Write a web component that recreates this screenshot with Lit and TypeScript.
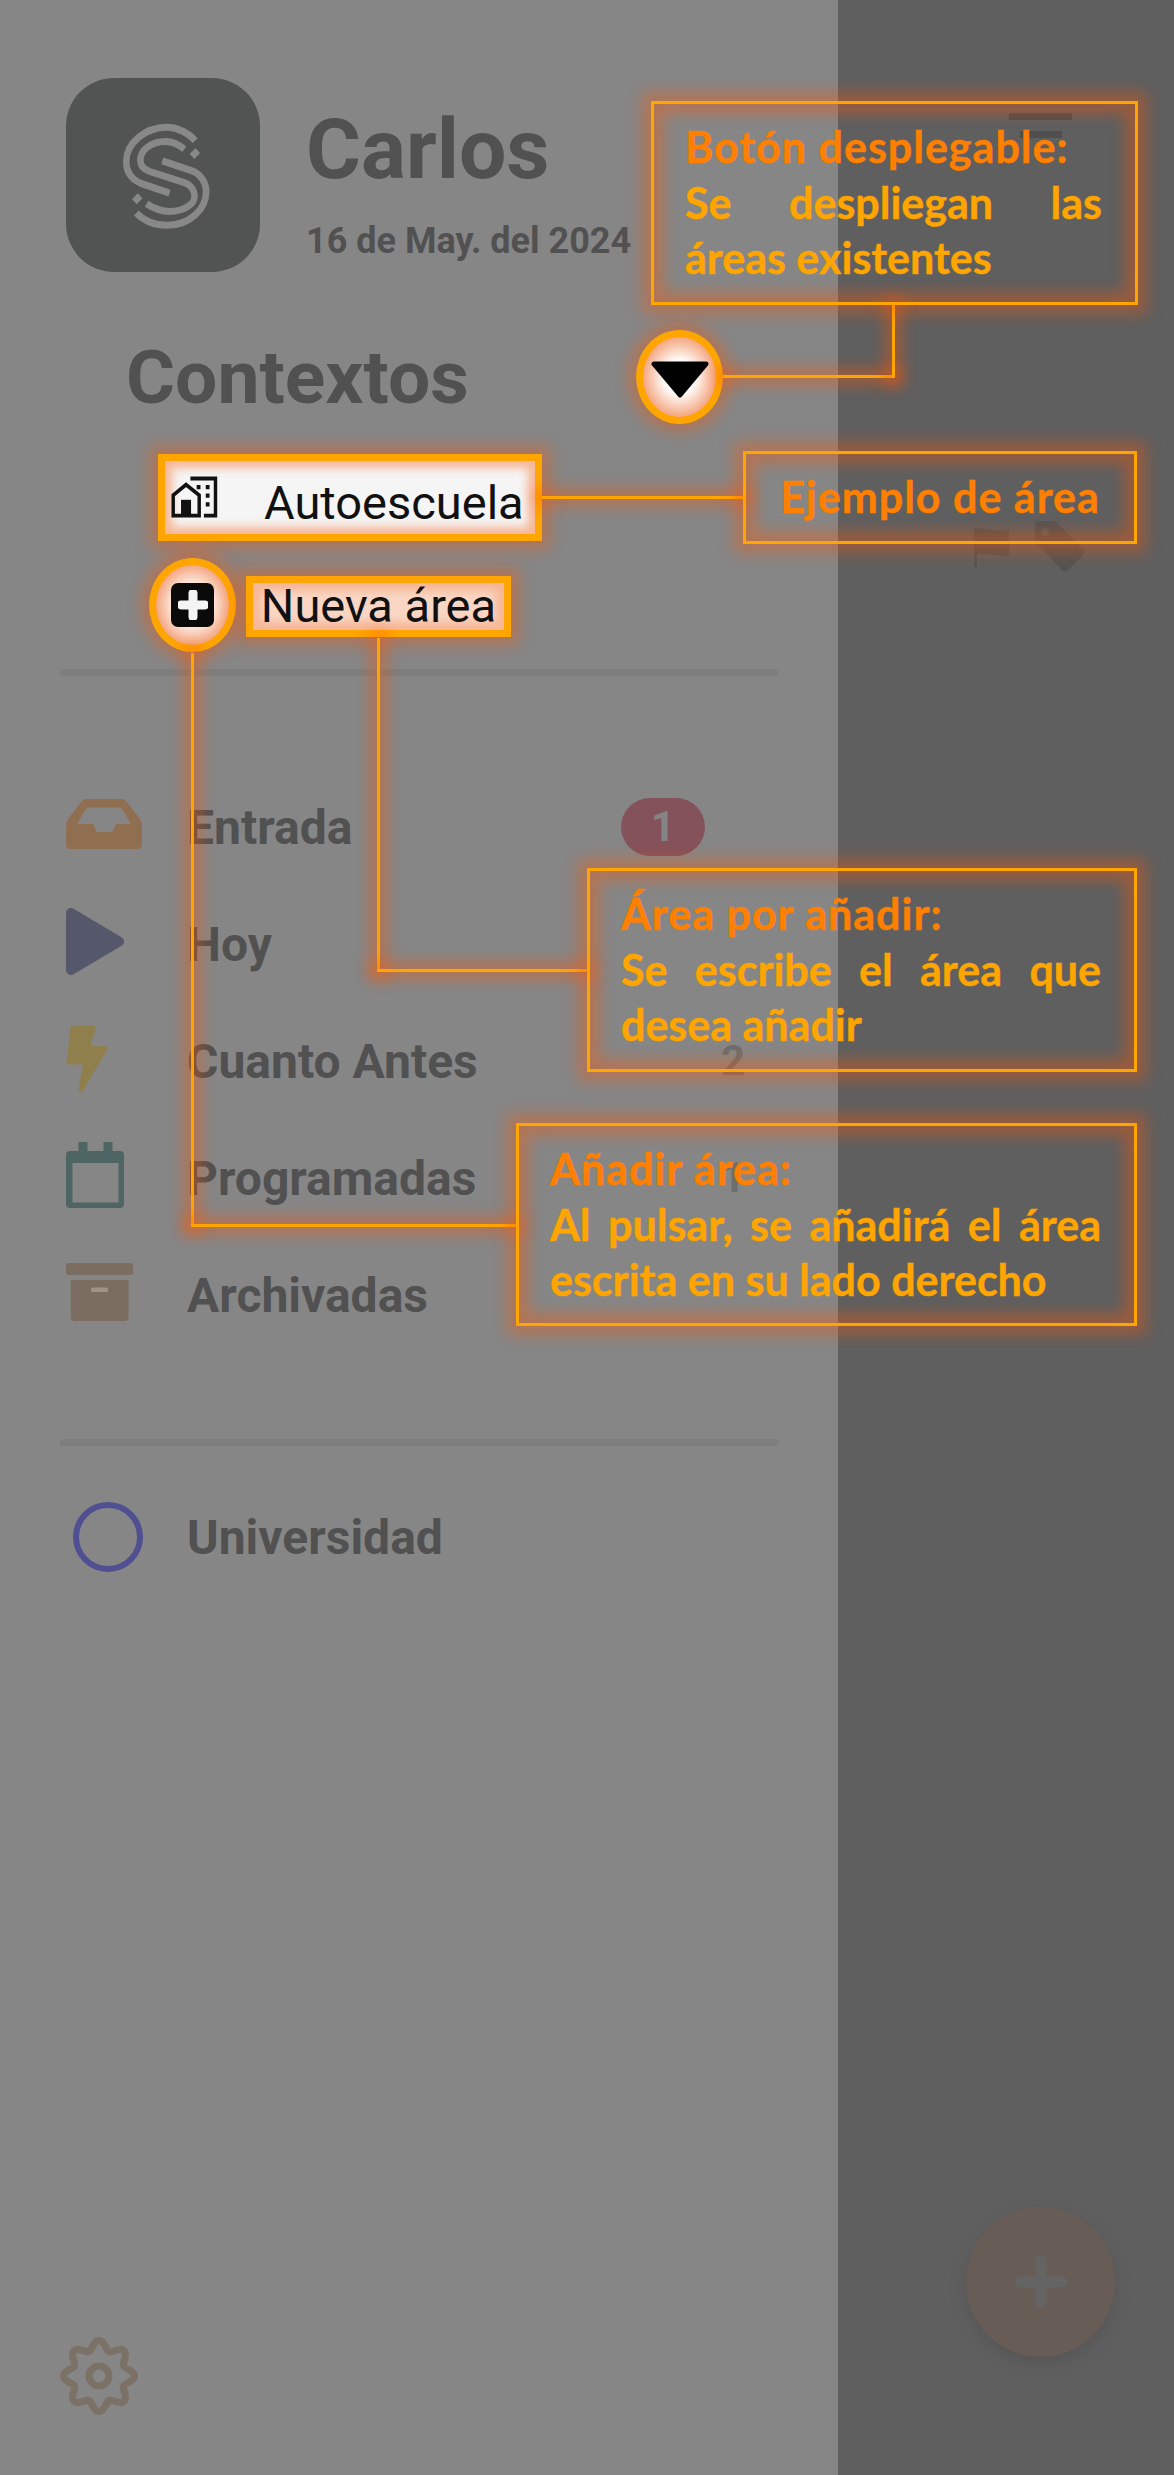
import {LitElement, html, css, svg} from 'lit';
import {customElement} from 'lit/decorators.js';

// wavy ring for the settings gear, eight lobes
function gearPath(cx: number, cy: number, r: number, amp: number) {
    const pts: string[] = [];
    for (let i = 0; i < 240; i++) {
        const t = (i / 240) * Math.PI * 2;
        const rad = r + amp * Math.cos(8 * t);
        pts.push(`${(cx + rad * Math.sin(t)).toFixed(2)},${(cy - rad * Math.cos(t)).toFixed(2)}`);
    }
    return `M${pts.join('L')}Z`;
}

const logoIcon = svg`
    <svg class="logo" viewBox="20 -30 300 340" preserveAspectRatio="none" fill="none" stroke="#888" stroke-width="21">
        <path d="M178 190 L85 160 C50 145 40 120 40 95 C40 40 100 -8 170 -8 C205 -8 240 10 260 32" />
        <path d="M225 58 C205 42 185 35 165 35 C120 35 85 60 85 90 C85 110 100 120 115 125 L230 160 C250 168 258 185 258 200 C258 225 220 245 180 245 C150 245 125 235 105 222" />
        <path d="M155 93 L250 123 C280 135 295 160 295 185 C295 240 240 287 170 287 C130 287 95 272 72 250" />
        <path d="M250 80 L268 62 M66 216 L84 198" />
    </svg>`;

const villageIcon = svg`
    <svg class="village" viewBox="30 30 150 120" preserveAspectRatio="none" fill="none" stroke="#111" stroke-width="11">
        <path d="M37 143 V85 L78 55 L120 85 V143 Z" />
        <path d="M92 37 H172 V143 H135" />
        <rect x="62" y="98" width="32" height="45" fill="#111" stroke="none" />
        <path d="M112 56 h12 v12 h-12z M141 56 h12 v12 h-12z M141 80 h12 v12 h-12z M141 105 h12 v12 h-12z" fill="#111" stroke="none" />
    </svg>`;

const inboxIcon = svg`
    <svg class="ic" width="76" height="50" viewBox="0 0 76 50">
        <path fill="#906e50" fill-rule="evenodd" d="M20 0 H56 Q59 0 61 3 L74 20 Q76 23 76 26 V45 Q76 50 71 50 H5 Q0 50 0 45 V26 Q0 23 2 20 L15 3 Q17 0 20 0Z M21 8.5 L11 25 H27 L30.5 33 H46.5 L50 25 H65 L55 8.5Z" />
    </svg>`;

const playIcon = svg`
    <svg class="ic" width="58" height="67" viewBox="0 0 58 67">
        <path fill="#55576a" stroke="#55576a" stroke-width="10" stroke-linejoin="round" d="M5 5 L53 33.5 L5 62Z" />
    </svg>`;

const boltIcon = svg`
    <svg class="ic" width="42" height="67" viewBox="0 0 42 67">
        <path fill="#8f7f4c" stroke="#8f7f4c" stroke-width="5" stroke-linejoin="round" d="M7 3 H27 L21 23.500 H39 L15 64 L20 37 H3Z" />
    </svg>`;

const calendarIcon = svg`
    <svg class="ic" width="58" height="66" viewBox="0 0 58 66">
        <path fill="#4f6563" fill-rule="evenodd" d="M12.500 0 H21.500 V9 H37.500 V0 H46.500 V9 H54 Q58 9 58 13 V62 Q58 66 54 66 H4 Q0 66 0 62 V13 Q0 9 4 9 H12.500Z M6.500 21 V60.500 H52.500 V21Z" />
    </svg>`;

const archiveIcon = svg`
    <svg class="ic" width="67" height="58" viewBox="0 0 67 58">
        <rect width="67" height="12" rx="3" fill="#7b6d5f" />
        <path fill="#7b6d5f" d="M4.700 17 H62.600 V54 Q62.600 58 58.600 58 H8.700 Q4.700 58 4.700 54Z" />
        <rect x="25" y="24.500" width="17" height="4.500" rx="1.500" fill="#a09488" />
    </svg>`;

const flagIcon = svg`
    <svg width="35" height="39" viewBox="0 0 35 39">
        <path fill="#545454" d="M0 1 C10 -1 22 5 35 2 V27 C22 30 12 24 3 26 V39 H0Z" />
    </svg>`;

const tagIcon = svg`
    <svg width="50" height="51" viewBox="0 0 50 51">
        <path fill="#545454" fill-rule="evenodd" d="M3 0 H20 L49 29 Q50 31 49 33 L32 50 Q30 51 28 50 L0 21 V3 Q0 0 3 0Z M10 7 A4 4 0 1 0 10 15 A4 4 0 1 0 10 7Z" />
    </svg>`;

const gearIcon = svg`
    <svg class="gear" width="78" height="78" viewBox="0 0 78 78" fill="none" stroke="#7b7166" stroke-width="7">
        <path d=${gearPath(39, 39, 31, 4.5)} />
        <circle cx="39" cy="39" r="10" />
    </svg>`;

const rows = [
    {icon: inboxIcon, label: 'Entrada', badge: '1'},
    {icon: playIcon, label: 'Hoy'},
    {icon: boltIcon, label: 'Cuanto Antes', count: '2'},
    {icon: calendarIcon, label: 'Programadas', count: '1'},
    {icon: archiveIcon, label: 'Archivadas'},
];

@customElement('app-root')
export class AppRoot extends LitElement {
    static override styles = css`
        :host {
            --glow: rgba(255, 85, 0, 0.36);
            display: flex;
            position: relative;
            width: 1174px;
            height: 2475px;
            overflow: hidden;
            background: #5f5f5f;
            font-family: 'Roboto', sans-serif;
            color: #515151;
        }

        /* drawer */
        .drawer {
            width: 838px;
            flex: none;
            box-sizing: border-box;
            padding: 78px 60px 60px;
            display: flex;
            flex-direction: column;
            background: #868686;
        }

        .header {
            display: flex;
            gap: 46px;
            margin-left: 6px;
        }

        .avatar {
            width: 194px;
            height: 194px;
            flex: none;
            border-radius: 48px;
            background: #525453;
            display: flex;
            align-items: center;
            justify-content: center;
        }

        .logo {
            width: 94px;
            height: 113px;
            margin: 3px 0 0 7px;
        }

        .who {
            padding-top: 24px;
            display: flex;
            flex-direction: column;
            gap: 21px;
        }

        .name {
            font-size: 84px;
            line-height: 96px;
            font-weight: 700;
        }

        .date {
            font-size: 36px;
            line-height: 44px;
            font-weight: 700;
            white-space: nowrap;
        }

        .contexts {
            height: 93px;
            margin: 58px 55px 0 0;
            padding-left: 66px;
            display: flex;
            align-items: center;
            justify-content: space-between;
        }

        .contexts h2 {
            margin: 0;
            font-size: 75px;
            font-weight: 700;
        }

        .spot {
            width: 87px;
            height: 94px;
            flex: none;
            box-sizing: border-box;
            border: 7px solid #ffa500;
            border-radius: 50%;
            background: radial-gradient(closest-side, #fff 40%, #f4a680 100%);
            box-shadow: 0 0 14px 8px var(--glow);
            display: flex;
            align-items: center;
            justify-content: center;
        }

        .tri {
            display: block;
            margin-top: 5px;
        }

        .lit {
            box-sizing: border-box;
            border: 7px solid #ffa500;
            display: flex;
            align-items: center;
            color: #111;
            font-weight: 400;
            background: #f5f5f5;
            box-shadow: 0 0 14px 8px var(--glow),
                inset 0 0 10px 7px #f6b796;
        }

        .area {
            width: 384px;
            height: 87px;
            margin: 31px 0 0 98px;
            padding-left: 6px;
            gap: 46px;
            font-size: 47px;
        }

        .area span {
            padding-top: 10px;
        }

        .village {
            width: 47px;
            height: 42px;
            flex: none;
            margin-top: -2px;
        }

        .new-row {
            display: flex;
            align-items: center;
            gap: 10px;
            margin: 17px 0 0 89px;
        }

        .new-name {
            width: 265px;
            height: 61px;
            margin-top: 3px;
            justify-content: center;
            font-size: 47px;
            padding-bottom: 2px;
            background: #f9d6c4;
            box-shadow: 0 0 14px 8px var(--glow),
                inset 0 0 8px 8px #f6b796;
        }

        .plus {
            width: 43px;
            height: 44px;
            border-radius: 7px;
            background: #0a0a0a;
            display: flex;
            align-items: center;
            justify-content: center;
        }

        .divider {
            height: 7px;
            flex: none;
            border-radius: 3px;
            background: #7e7e7e;
        }

        .new-row + .divider {
            margin-top: 17px;
        }

        .list {
            margin-top: 92px;
        }

        .list + .divider {
            margin-top: 86px;
        }

        .row {
            height: 117px;
            display: flex;
            align-items: center;
            font-size: 48px;
            font-weight: 700;
        }

        .row-label {
            padding-top: 1px;
        }

        .slot {
            width: 127px;
            flex: none;
            padding-left: 6px;
            box-sizing: border-box;
            display: flex;
            align-items: center;
        }

        .ic {
            display: block;
            margin-top: -5px;
        }

        .badge {
            margin: 0 73px 0 auto;
            width: 84px;
            height: 58px;
            border-radius: 29px;
            background: #84525a;
            color: #858585;
            font-size: 42px;
            display: flex;
            align-items: center;
            justify-content: center;
        }

        .count {
            margin: 0 33px 0 auto;
            font-size: 42px;
            color: #6e6e6e;
        }

        .project {
            margin-top: 32px;
        }

        .ring {
            width: 70px;
            height: 70px;
            margin-left: 7px;
            box-sizing: border-box;
            border: 6px solid #4f4f91;
            border-radius: 50%;
        }

        .gear {
            display: block;
            margin-top: auto;
        }

        /* what is left of the page behind the drawer */
        .main {
            flex: 1;
            display: flex;
            flex-direction: column;
            align-items: flex-end;
            padding-top: 113px;
        }

        .burger {
            width: 63px;
            margin-right: 102px;
            display: flex;
            flex-direction: column;
            align-items: center;
            gap: 11px;
        }

        .burger span {
            display: block;
            height: 7px;
            width: 100%;
            background: #4f4f4f;
        }

        .burger span + span {
            width: 42px;
        }

        .marks {
            display: flex;
            align-items: flex-start;
            gap: 26px;
            margin: 383px 89px 0 0;
        }

        .flag {
            margin-top: 7px;
        }

        .fab {
            width: 149px;
            height: 150px;
            margin: auto 59px 118px 0;
            border-radius: 50%;
            background: #685c56;
            box-shadow: 0 6px 14px rgba(80, 80, 80, 0.6);
            display: flex;
            align-items: center;
            justify-content: center;
        }

        /* annotation layer */
        .note {
            position: absolute;
            box-sizing: border-box;
            left: 587px;
            width: 550px;
            padding: 15px 33px 0 31px;
            border: 3px solid #ffa500;
            box-shadow: 0 0 14px 9px var(--glow),
                inset 0 0 14px 10px var(--glow);
            font-family: 'Lato', sans-serif;
            font-weight: 700;
            font-size: 43px;
            -webkit-text-stroke: 0.4px currentColor;
            line-height: 55.5px;
            color: #ffa500;
            text-align: justify;
        }

        .note b {
            display: block;
            color: #ff8000;
            font-weight: 700;
            letter-spacing: 1px;
        }

        .note-drop {
            left: 651px;
            top: 101px;
            width: 487px;
            height: 204px;
        }

        .note-sample {
            left: 743px;
            top: 451px;
            width: 394px;
            height: 93px;
            padding: 15px 0 0;
            text-align: center;
        }

        .note-name {
            top: 868px;
            height: 204px;
        }

        .note-add {
            left: 516px;
            top: 1123px;
            width: 621px;
            height: 203px;
        }

        .line {
            position: absolute;
            background: #ffa500;
            box-shadow: 0 0 14px 8px var(--glow);
        }

        .l1a { left: 723px; top: 375px; width: 172px; height: 3px; }
        .l1b { left: 892px; top: 305px; width: 3px; height: 73px; }
        .l2 { left: 542px; top: 496px; width: 201px; height: 3px; }
        .l3a { left: 377px; top: 638px; width: 3px; height: 334px; }
        .l3b { left: 377px; top: 969px; width: 210px; height: 3px; }
        .l4a { left: 191px; top: 653px; width: 3px; height: 574px; }
        .l4b { left: 191px; top: 1224px; width: 325px; height: 3px; }
    `;

    override render() {
        return html`
            <aside class="drawer">
                <header class="header">
                    <div class="avatar">${logoIcon}</div>
                    <div class="who">
                        <div class="name">Carlos</div>
                        <div class="date">16 de May. del 2024</div>
                    </div>
                </header>

                <div class="contexts">
                    <h2>Contextos</h2>
                    <div class="spot">
                        <svg class="tri" width="58" height="37" viewBox="0 0 58 37">
                            <path d="M3 3 H55 L29 34Z" fill="#000" stroke="#000" stroke-width="5" stroke-linejoin="round" />
                        </svg>
                    </div>
                </div>

                <div class="lit area">${villageIcon}<span>Autoescuela</span></div>

                <div class="new-row">
                    <div class="spot">
                        <div class="plus">
                            <svg width="30" height="30" viewBox="0 0 30 30">
                                <path d="M15 3 V27 M3 15 H27" stroke="#f4f4f4" stroke-width="9" stroke-linecap="round" />
                            </svg>
                        </div>
                    </div>
                    <div class="lit new-name">Nueva área</div>
                </div>

                <div class="divider"></div>

                <div class="list">
                    ${rows.map(
                        (r) => html`
                            <div class="row">
                                <div class="slot">${r.icon}</div>
                                <span class="row-label">${r.label}</span>
                                ${r.badge ? html`<span class="badge">${r.badge}</span>` : ''}
                                ${r.count ? html`<span class="count">${r.count}</span>` : ''}
                            </div>
                        `
                    )}
                </div>

                <div class="divider"></div>

                <div class="row project">
                    <div class="slot"><div class="ring"></div></div>
                    <span class="row-label">Universidad</span>
                </div>

                ${gearIcon}
            </aside>

            <main class="main">
                <div class="burger"><span></span><span></span></div>
                <div class="marks">
                    <div class="flag">${flagIcon}</div>
                    ${tagIcon}
                </div>
                <div class="fab">
                    <svg width="52" height="52" viewBox="0 0 52 52">
                        <path d="M26 5 V47 M5 26 H47" stroke="#646464" stroke-width="11" stroke-linecap="round" />
                    </svg>
                </div>
            </main>

            <div class="line l1a"></div>
            <div class="line l1b"></div>
            <div class="line l2"></div>
            <div class="line l3a"></div>
            <div class="line l3b"></div>
            <div class="line l4a"></div>
            <div class="line l4b"></div>

            <div class="note note-drop">
                <b>Botón desplegable:</b>
                Se despliegan las áreas existentes
            </div>
            <div class="note note-sample"><b>Ejemplo de área</b></div>
            <div class="note note-name">
                <b>Área por añadir:</b>
                Se escribe el área que desea añadir
            </div>
            <div class="note note-add">
                <b>Añadir área:</b>
                Al pulsar, se añadirá el área escrita en su lado derecho
            </div>
        `;
    }
}

declare global {
    interface HTMLElementTagNameMap {
        'app-root': AppRoot;
    }
}
